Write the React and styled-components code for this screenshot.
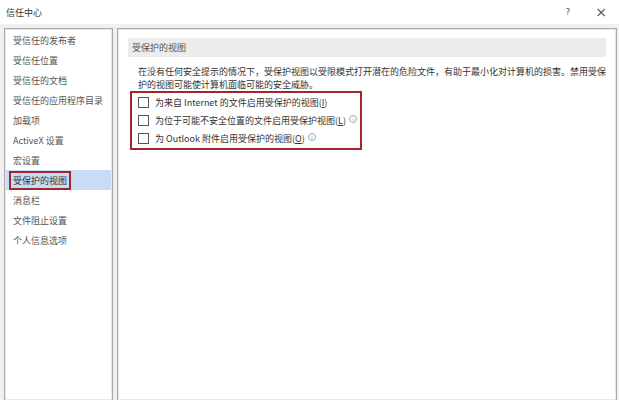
import React from 'react'
import styled, {createGlobalStyle} from 'styled-components'

const GlobalStyle = createGlobalStyle`
    html, body {
        margin: 0;
        padding: 0;
        background: #f0f0f0;
    }
    body {
        font-family: "Noto Sans CJK SC", "Noto Sans", sans-serif;
        color: #444;
    }
`

const Window = styled.div`
    width: 619px;
    height: 400px;
    display: flex;
    flex-flow: column;
    overflow: hidden;
    background: #f0f0f0;
`

const TitleBar = styled.div`
    height: 24px;
    flex-shrink: 0;
    display: flex;
    align-items: center;
    background: #fff;
    padding: 0 0 0 6px;
    font-size: 9px;
    color: #333;

    >.title {
        flex-grow: 1;
    }
`

const TitleButton = styled.div`
    width: ${p => p.w}px;
    margin-right: ${p => p.after || 0}px;
    text-align: center;
    font-size: ${p => p.size}px;
    color: #555;
    font-family: "DejaVu Sans", sans-serif;
`

const Body = styled.div`
    flex-grow: 1;
    display: flex;
    flex-flow: row;
    gap: 4px;
    padding: 4px 5px 0 4px;
`

const Panel = styled.div`
    background: #fff;
    border: 1px solid #a9a9a9;
    border-bottom: none;
    box-shadow: inset 0 0 0 1px #e8e8e8;
`

const Nav = styled(Panel)`
    width: 109px;
    box-sizing: border-box;
    flex-shrink: 0;
    padding: 1px 1px 0 1px;
    display: flex;
    flex-flow: column;
`

const NavItem = styled.div`
    height: 20px;
    display: flex;
    align-items: center;
    padding-left: ${p => p.selected ? '3px' : '7px'};
    font-size: 9px;
    color: #555;
    white-space: nowrap;
    background: ${p => p.selected ? '#c9dcf5' : 'transparent'};

    >.boxed {
        border: 2px solid #a3262d;
        padding: 1px 2px;
        color: #333;
    }
`

const Content = styled(Panel)`
    flex-grow: 1;
    padding: 9px 10px 0 10px;
`

const SectionHeader = styled.div`
    height: 19px;
    display: flex;
    align-items: center;
    padding-left: 4px;
    background: #ececec;
    font-size: 9px;
    color: #555;
`

const Description = styled.div`
    margin: 8px 0 0 10px;
    font-size: 9px;
    line-height: 13px;
    color: #333;
    white-space: nowrap;
`

const OptionBox = styled.div`
    margin: 0 0 0 2px;
    width: 222px;
    border: 2px solid #a3262d;
    padding: 0 0 1px 6px;
    display: flex;
    flex-flow: column;
`

const Option = styled.div`
    height: 18px;
    display: flex;
    align-items: center;
    gap: 6px;
    font-size: 9px;
    color: #333;
    white-space: nowrap;

    u {
        text-decoration: underline;
    }
`

const Check = styled.span`
    width: 9px;
    height: 9px;
    border: 1px solid #555;
    background: #fff;
    flex-shrink: 0;
`

const Info = styled.span`
    display: inline-flex;
    align-items: center;
    justify-content: center;
    width: 6px;
    height: 6px;
    margin-left: 3px;
    border: 1px solid #9ab;
    border-radius: 50%;
    font-size: 5px;
    color: #89a;
    font-family: "DejaVu Serif", serif;
    vertical-align: 3px;
`

const navItems = [
    '受信任的发布者',
    '受信任位置',
    '受信任的文档',
    '受信任的应用程序目录',
    '加载项',
    'ActiveX 设置',
    '宏设置',
    '受保护的视图',
    '消息栏',
    '文件阻止设置',
    '个人信息选项',
]

const App = () => (
    <Window>
        <GlobalStyle/>
        <TitleBar>
            <span className="title">信任中心</span>
            <TitleButton w={14} size={9} after={8}>?</TitleButton>
            <TitleButton w={36} size={14}>×</TitleButton>
        </TitleBar>
        <Body>
            <Nav>
                {navItems.map(item => (
                    <NavItem key={item} selected={item === '受保护的视图'}>
                        {item === '受保护的视图' ? <span className="boxed">{item}</span> : item}
                    </NavItem>
                ))}
            </Nav>
            <Content>
                <SectionHeader>受保护的视图</SectionHeader>
                <Description>
                    在没有任何安全提示的情况下，受保护视图以受限模式打开潜在的危险文件，有助于最小化对计算机的损害。禁用受保
                    <br/>
                    护的视图可能使计算机面临可能的安全威胁。
                </Description>
                <OptionBox>
                    <Option>
                        <Check/>
                        <span>为来自 Internet 的文件启用受保护的视图(<u>I</u>)</span>
                    </Option>
                    <Option>
                        <Check/>
                        <span>为位于可能不安全位置的文件启用受保护视图(<u>L</u>)<Info>i</Info></span>
                    </Option>
                    <Option>
                        <Check/>
                        <span>为 Outlook 附件启用受保护的视图(<u>O</u>)<Info>i</Info></span>
                    </Option>
                </OptionBox>
            </Content>
        </Body>
    </Window>
)

export default App
